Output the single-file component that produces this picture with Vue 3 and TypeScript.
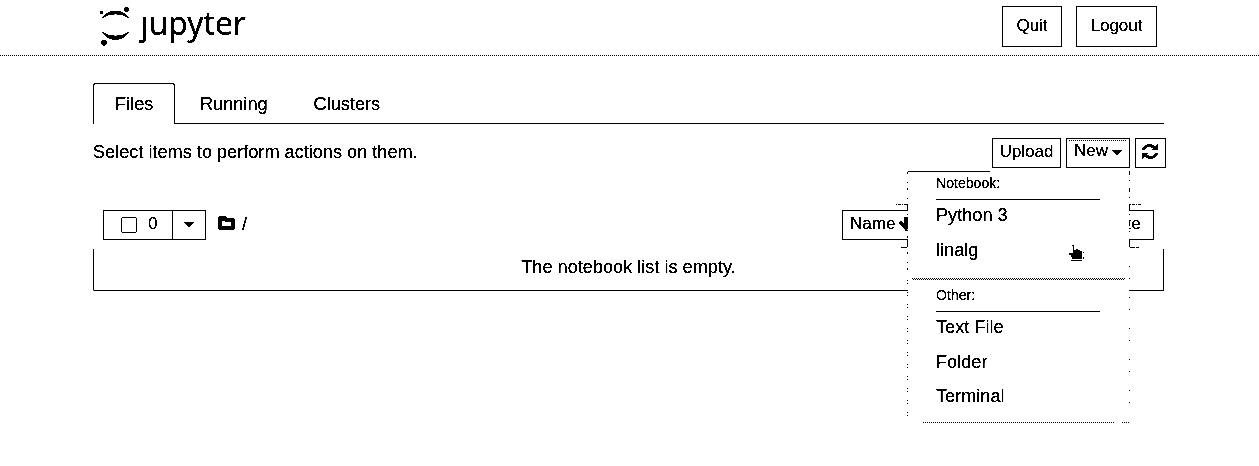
<script setup lang="ts">
const tabs: string[] = ['Files', 'Running', 'Clusters']
const groups: { title: string; items: string[] }[] = [
  { title: 'Notebook:', items: ['Python 3', 'linalg'] },
  { title: 'Other:', items: ['Text File', 'Folder', 'Terminal'] },
]
</script>

<template>
  <div class="page">
    <header class="header">
      <svg class="logo" width="152" height="48" viewBox="0 0 152 48">
        <path d="M3.500 18.500C10 8 25 8 31.500 18.500Q17.500 10 3.500 18.500Z" />
        <path d="M3.500 31.500C10 42.500 25 42.500 31.500 31.500Q17.500 40 3.500 31.500Z" />
        <circle cx="28.500" cy="9.3" r="2.5" />
        <circle cx="3.5" cy="12.5" r="1.6" />
        <circle cx="6" cy="42.8" r="2.7" />
        <text x="42.500" y="34.500" textLength="105.500" lengthAdjust="spacingAndGlyphs">ȷupyter</text>
      </svg>
      <div class="session">
        <button class="btn quit">Quit</button>
        <button class="btn logout">Logout</button>
      </div>
    </header>

    <main class="main">
      <nav class="tabs">
        <a v-for="(tab, i) in tabs" :key="tab" class="tab" :class="{ active: i === 0 }">{{ tab }}</a>
      </nav>

      <div class="toolbar">
        <span class="hint">Select items to perform actions on them.</span>
        <div class="actions">
          <button class="btn upload">Upload</button>
          <div class="new">
            <button class="btn new-btn">New<i class="caret"></i></button>
            <div class="menu">
              <svg class="edge" width="260" height="270" viewBox="0 0 260 270">
                <path d="M21 3.5H103" />
                <path d="M20.5 4V110" stroke-dasharray="2 8 1 5" />
                <path d="M20.5 112V248" stroke-dasharray="1 2 1 8" />
                <path d="M20.5 36V43M20.5 72V79M14 79.500H20M242.500 36V43M242.500 72V79M243 79.500H247" />
                <path d="M9 36.500H20M243 36.500H255M247 79.500H253M9 122.500H20M243 122.500H253" stroke-dasharray="1 1 3 1" />
                <path d="M242.500 3V76" stroke-dasharray="4 5 1 7" />
                <path d="M242.500 98V250" stroke-dasharray="1 11 1 18" />
                <path d="M36 254.500H227M235 254.500H242" stroke-dasharray="1 1" />
              </svg>
              <section v-for="group in groups" :key="group.title" class="group">
                <h6 class="title">{{ group.title }}</h6>
                <a v-for="item in group.items" :key="item" class="item">{{ item }}</a>
              </section>
              <svg class="pointer" width="16" height="18" viewBox="0 0 16 18">
                <path d="M3 1h2v5h2v-1h2v1h2v1h2v8H3v-2H2v-2H0V9h4V3z" />
                <path d="M2 16.500h11M14.500 8v1M14.500 13v2" class="line" />
              </svg>
            </div>
          </div>
          <button class="btn refresh">
            <svg width="16" height="15" viewBox="0 0 16 15">
              <path d="M1.500 6C2 2 8-.5 12 3.500" class="arc" />
              <path d="M14.500 9C14 13 8 15.500 4 11.500" class="arc" />
              <path d="M15.500 0v6h-6zM.5 15V9h6z" />
            </svg>
          </button>
        </div>
      </div>

      <div class="list">
        <div class="list-head">
          <div class="select">
            <span class="pick"><i class="box"></i>0</span>
            <span class="drop"><i class="caret"></i></span>
          </div>
          <svg class="folder" width="18" height="15" viewBox="0 0 18 15">
            <path fill-rule="evenodd" d="M2 0h5l2 2h6l2 2v8l-2 2H2l-2-2V2zM4 5v5h9V6H8L7 5z" />
          </svg>
          <span class="root">/</span>
          <div class="sorts">
            <button class="btn name">Name
              <svg width="14" height="15" viewBox="0 0 14 15"><path d="M5 0h4v7l3-3 2 2-7 8-7-8 2-2 3 3z" /></svg>
            </button>
            <button class="btn size">File size</button>
          </div>
        </div>
        <div class="empty">The notebook list is empty.</div>
      </div>
    </main>
  </div>
</template>

<style>
body {
  background: #fff;
}
</style>

<style scoped>
* {
  box-sizing: border-box;
}
.page {
  height: 466px;
  overflow: hidden;
  background: #fff;
  color: #000;
  font: 18.15px/26px "Liberation Sans", Arial, sans-serif;
  filter: grayscale(1) brightness(0.76) contrast(16);
}
.header {
  height: 56px;
  padding: 0 102px 0 98px;
  display: flex;
  justify-content: space-between;
  background: repeating-linear-gradient(90deg, #000 0 1px, #fff 1px 2px) 0 55px / 100% 1px no-repeat;
}
.logo text {
  font: 32px "Noto Sans", sans-serif;
}
.session {
  display: flex;
  gap: 14px;
  padding-top: 6px;
}
.btn {
  height: 30px;
  margin: 0;
  padding: 0 0 5px;
  border: 1px solid #000;
  border-radius: 1px;
  background: #fff;
  color: #000;
  font: 17px/26px "Liberation Sans", Arial, sans-serif;
  white-space: nowrap;
}
.quit {
  width: 60px;
  height: 41px;
  padding-bottom: 2px;
}
.logout {
  width: 81px;
  height: 41px;
  padding-bottom: 2px;
}
.main {
  width: 1073px;
  margin-left: 93px;
  padding-top: 27px;
}
.tabs {
  display: flex;
  width: 1071px;
  height: 41px;
  border-bottom: 1px solid #000;
}
.tab {
  height: 41px;
  padding: 8px 22px 0 24px;
}
.tab.active {
  width: 82px;
  margin-right: 1px;
  padding-left: 21px;
  padding-top: 7px;
  border: 1px solid #000;
  border-bottom: 0;
  border-radius: 3px 3px 0 0;
  background: #fff;
}
.toolbar {
  display: flex;
  justify-content: space-between;
  padding-top: 14px;
  height: 44px;
}
.hint {
  margin-top: 1px;
}
.actions {
  display: flex;
  gap: 5px;
}
.upload {
  width: 69px;
}
.new {
  position: relative;
}
.new-btn {
  display: flex;
  align-items: center;
  justify-content: center;
  gap: 4px;
  width: 64px;
  padding-bottom: 4px;
  background: repeating-linear-gradient(90deg, #000 0 1px, #fff 1px 2px) 2px 1px / 58px 1px no-repeat #fff;
}
.new-btn .caret {
  margin-top: 3px;
}
.caret {
  width: 0;
  border: 5px solid transparent;
  border-top-color: #000;
  border-bottom: 0;
}
.refresh {
  display: flex;
  align-items: center;
  justify-content: center;
  width: 31px;
  padding: 0 1px 3px 0;
}
.arc {
  fill: none;
  stroke: #000;
  stroke-width: 2.5;
}
.menu {
  position: absolute;
  z-index: 2;
  top: 33px;
  right: 1px;
  width: 221px;
  height: 251px;
  background: #fff;
}
.edge {
  position: absolute;
  left: -21px;
  top: -3px;
  fill: none;
  stroke: #000;
  stroke-width: 1;
  shape-rendering: crispEdges;
}
.group {
  position: relative;
  height: 112px;
  padding-left: 28px;
}
.group:nth-of-type(1) {
  background:
    repeating-linear-gradient(90deg, #000 0 1px, #fff 1px 2px) 4px 107px / 213px 1px no-repeat,
    repeating-linear-gradient(90deg, #000 0 1px, #fff 1px 2px) 5px 108px / 212px 1px no-repeat;
}
.title {
  width: 164px;
  height: 29px;
  margin: 0 0 -1px;
  border-bottom: 1px solid #000;
  font-size: 14.1px;
  line-height: 25px;
  font-weight: 400;
}
.item {
  display: block;
  height: 34.5px;
  line-height: 33px;
}
.pointer {
  position: absolute;
  left: 161px;
  top: 73px;
}
.line {
  fill: none;
  stroke: #000;
}
.list {
  width: 1071px;
  padding-top: 42px;
}
.list-head {
  display: flex;
  height: 39px;
  padding: 0 10px;
}
.select {
  display: flex;
  width: 103px;
  height: 30px;
  border: 1px solid #000;
  border-radius: 1px;
}
.pick {
  display: flex;
  width: 69px;
  padding-left: 17px;
  gap: 11px;
  border-right: 1px solid #000;
  font-size: 17px;
}
.box {
  width: 16px;
  height: 16px;
  margin-top: 6px;
  border: 1px solid #000;
  border-radius: 2px;
}
.drop {
  padding: 11px 0 0 11px;
}
.drop .caret {
  display: block;
}
.folder {
  margin: 6px 0 0 12px;
}
.root {
  margin: 1px 0 0 6px;
}
.sorts {
  display: flex;
  flex: 1;
  justify-content: space-between;
  margin-left: 595px;
}
.name {
  width: 80px;
  padding-left: 7px;
  text-align: left;
}
.name svg {
  margin-left: -1px;
  vertical-align: -3px;
}
.size {
  width: 90px;
  padding-right: 12px;
  text-align: right;
}
.empty {
  height: 42px;
  padding-top: 5px;
  border: 1px solid #000;
  border-top: 0;
  border-radius: 0 0 2px 2px;
  text-align: center;
}
</style>
